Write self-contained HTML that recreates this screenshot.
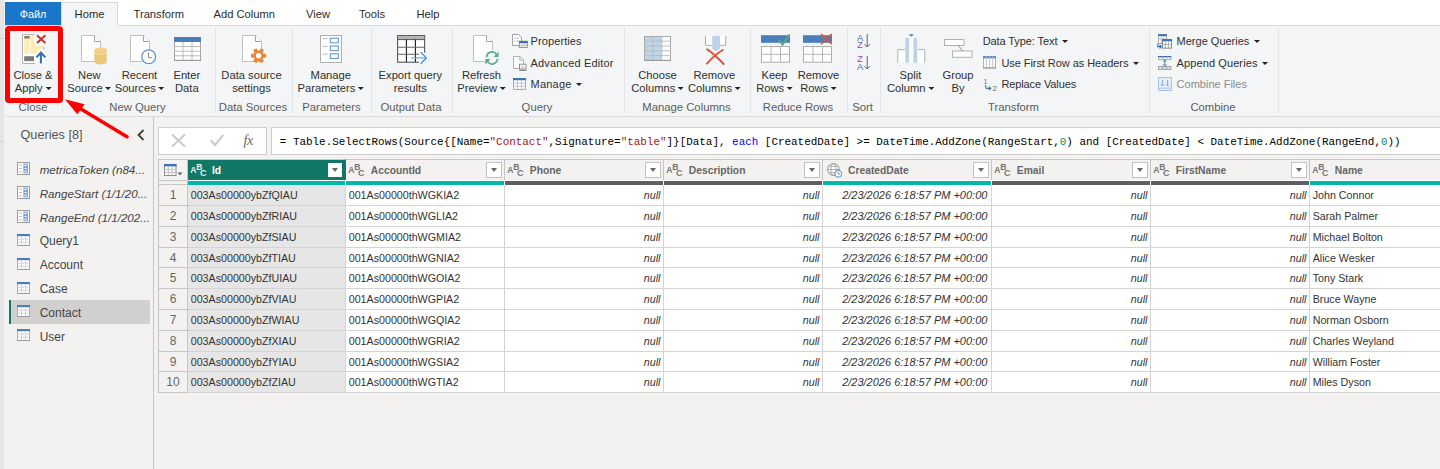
<!DOCTYPE html>
<html>
<head>
<meta charset="utf-8">
<title>Power Query Editor</title>
<style>
*{box-sizing:border-box;margin:0;padding:0}
html,body{width:1440px;height:469px;overflow:hidden;background:#f3f2f1;font-family:"Liberation Sans",sans-serif;font-size:11px;color:#333}
#root{position:relative;width:1440px;height:469px;overflow:hidden;background:#e5e5e5}
#tabrow{position:absolute;left:5px;top:0;width:1435px;height:26px;background:#fff}
#ribbon{position:absolute;left:5px;top:25px;width:1435px;height:92px;background:#f3f5f7;border-top:1px solid #d6d8db;border-bottom:1px solid #d9dbdd}
.tab{position:absolute;top:2px;height:23px;line-height:24.4px;font-size:11.2px;color:#2b2b2b;white-space:nowrap}
#filetab{left:5px;width:56px;background:#1a76c8;color:#fff;text-align:center}
#hometab{left:61px;width:57px;background:#f3f5f7;border:1px solid #d6d8db;border-bottom:none;height:24px;text-align:center;line-height:23.4px}
.rl{position:absolute;font-size:11.2px;line-height:13px;color:#303030;text-align:center;white-space:nowrap;transform:translateX(-50%)}
.rs{position:absolute;font-size:11px;line-height:13px;color:#303030;white-space:nowrap}
.gl{position:absolute;top:100.7px;font-size:11.3px;line-height:13px;color:#5c5c5c;white-space:nowrap;transform:translateX(-50%)}
.sep{position:absolute;top:28px;width:1px;height:85px;background:#e2e4e7}
.dd{display:inline-block;width:0;height:0;border-left:3px solid transparent;border-right:3px solid transparent;border-top:3px solid #222;margin-left:2.6px;position:relative;top:-2px}
svg{position:absolute;overflow:visible}
#qpane{position:absolute;left:5px;top:117px;width:149px;height:352px;background:#f3f2f1;border-right:1px solid #c8c6c4}
.qi{position:absolute;left:39.7px;font-size:12px;line-height:16px;color:#444;white-space:nowrap}
.qi.it{font-style:italic;font-size:11.6px}
#main{position:absolute;left:154px;top:117px;width:1286px;height:352px;background:#f3f2f1}
#fxbox{position:absolute;left:158px;top:127px;width:109px;height:28px;background:#fff;border:1px solid #cfcdcb}
#fbox{position:absolute;left:271px;top:127px;width:1180px;height:28px;background:#fff;border:1px solid #cfcdcb;font-family:"Liberation Mono",monospace;font-size:10.93px;line-height:28.4px;white-space:pre;color:#000;padding-left:7.8px}
.k{color:#0000ff}.s{color:#a31515}.nn{color:#098658}
#grid{position:absolute;left:158px;top:159px;width:1282px;height:234px;background:#fff}
.hc{position:absolute;top:159px;height:21px;background:#f3f2f1;border-right:1px solid #c8c6c4;border-top:1px solid #c8c6c4;font-weight:bold;font-size:10.3px;line-height:22px;color:#666;white-space:nowrap}
.hc .nm{position:absolute;top:0}
.hc .btn{position:absolute;right:1.8px;top:2px;width:16px;height:16px;background:#fff;border:1px solid #c2c2c2}
.hc .btn:after{content:"";position:absolute;left:3.4px;top:5.4px;border-left:3.6px solid transparent;border-right:3.6px solid transparent;border-top:4px solid #666}
.abc{position:absolute;font-weight:bold;font-size:8.6px;line-height:9px;color:#747474}
.q{position:absolute;top:181px;height:4px}
.cell{position:absolute;font-size:10.7px;color:#333;white-space:nowrap;border-right:1px solid #d4d4d4;border-bottom:1px solid #d4d4d4;overflow:hidden}
.cell span{position:absolute;top:0}
.cell.n,.cell.d{font-style:italic}
.cell.n span{right:2.6px}.cell.d span{right:3.6px}
.cell.t span{left:2.7px}
.rn{position:absolute;left:158px;width:30px;background:#f3f2f1;border:1px solid #c8c6c4;border-top:none;text-align:center;font-size:12px;color:#666}
</style>
</head>
<body>
<div id="root">
<div id="tabrow"></div><div id="ribbon"></div>
<div id="filetab" class="tab" style="font-size:10.8px">Файл</div>
<div style="position:absolute;left:4px;top:0;width:1px;height:469px;background:#f2f2f2"></div>
<div style="position:absolute;left:0;top:38px;width:4px;height:1px;background:#cfcfcf"></div>
<div style="position:absolute;left:0;top:141px;width:4px;height:1px;background:#d2d2d2"></div>
<div id="hometab" class="tab">Home</div>
<div class="tab" style="left:133.5px">Transform</div>
<div class="tab" style="left:213.5px">Add Column</div>
<div class="tab" style="left:306px">View</div>
<div class="tab" style="left:359px">Tools</div>
<div class="tab" style="left:416.5px">Help</div>
<div class="sep" style="left:215px"></div>
<div class="sep" style="left:292px"></div>
<div class="sep" style="left:371px"></div>
<div class="sep" style="left:452px"></div>
<div class="sep" style="left:624px"></div>
<div class="sep" style="left:750px"></div>
<div class="sep" style="left:847px"></div>
<div class="sep" style="left:880px"></div>
<div class="sep" style="left:1149px"></div>
<div class="sep" style="left:1278px"></div>
<div class="sep" style="left:61.5px;top:100px;height:12px"></div>
<div class="rl" style="left:33px;top:68.5px">Close &amp;</div>
<div class="rl" style="left:33px;top:81.5px">Apply<i class="dd"></i></div>
<div class="rl" style="left:89.3px;top:68.5px">New</div>
<div class="rl" style="left:89.3px;top:81.5px">Source<i class="dd"></i></div>
<div class="rl" style="left:139.5px;top:68.5px">Recent</div>
<div class="rl" style="left:139.5px;top:81.5px">Sources<i class="dd"></i></div>
<div class="rl" style="left:186.8px;top:68.5px">Enter</div>
<div class="rl" style="left:186.8px;top:81.5px">Data</div>
<div class="rl" style="left:251.5px;top:68.5px">Data source</div>
<div class="rl" style="left:251.5px;top:81.5px">settings</div>
<div class="rl" style="left:330.8px;top:68.5px">Manage</div>
<div class="rl" style="left:330.8px;top:81.5px">Parameters<i class="dd"></i></div>
<div class="rl" style="left:410.3px;top:68.5px">Export query</div>
<div class="rl" style="left:410.3px;top:81.5px">results</div>
<div class="rl" style="left:481.5px;top:68.5px">Refresh</div>
<div class="rl" style="left:481.5px;top:81.5px">Preview<i class="dd"></i></div>
<div class="rl" style="left:657.5px;top:68.5px">Choose</div>
<div class="rl" style="left:657.5px;top:81.5px">Columns<i class="dd"></i></div>
<div class="rl" style="left:714.3px;top:68.5px">Remove</div>
<div class="rl" style="left:714.3px;top:81.5px">Columns<i class="dd"></i></div>
<div class="rl" style="left:774.5px;top:68.5px">Keep</div>
<div class="rl" style="left:774.5px;top:81.5px">Rows<i class="dd"></i></div>
<div class="rl" style="left:818.5px;top:68.5px">Remove</div>
<div class="rl" style="left:818.5px;top:81.5px">Rows<i class="dd"></i></div>
<div class="rl" style="left:910.5px;top:68.5px">Split</div>
<div class="rl" style="left:910.5px;top:81.5px">Column<i class="dd"></i></div>
<div class="rl" style="left:958px;top:68.5px">Group</div>
<div class="rl" style="left:958px;top:81.5px">By</div>
<div class="rs" style="left:530.6px;top:34.8px;letter-spacing:0.09px">Properties</div>
<div class="rs" style="left:530.6px;top:56.6px;letter-spacing:0.15px">Advanced Editor</div>
<div class="rs" style="left:530.6px;top:78.4px;letter-spacing:0.2px">Manage<i class="dd" style="margin-left:4.8px"></i></div>
<div class="rs" style="left:982.7px;top:34.8px;letter-spacing:-0.09px">Data Type: Text<i class="dd" style="margin-left:4.8px"></i></div>
<div class="rs" style="left:1001.4px;top:56.6px;letter-spacing:-0.06px">Use First Row as Headers<i class="dd" style="margin-left:4.8px"></i></div>
<div class="rs" style="left:1001.4px;top:78.4px;letter-spacing:-0.11px">Replace Values</div>
<div class="rs" style="left:1176.6px;top:34.8px">Merge Queries<i class="dd" style="margin-left:4.8px"></i></div>
<div class="rs" style="left:1176.6px;top:56.6px;letter-spacing:0.1px">Append Queries<i class="dd" style="margin-left:4.8px"></i></div>
<div class="rs" style="left:1176.6px;top:78.4px;color:#8c8c8c">Combine Files</div>
<div class="gl" style="left:33px">Close</div>
<div class="gl" style="left:137.5px">New Query</div>
<div class="gl" style="left:253px">Data Sources</div>
<div class="gl" style="left:331.5px">Parameters</div>
<div class="gl" style="left:411px">Output Data</div>
<div class="gl" style="left:537px">Query</div>
<div class="gl" style="left:686.5px">Manage Columns</div>
<div class="gl" style="left:798px">Reduce Rows</div>
<div class="gl" style="left:862.5px">Sort</div>
<div class="gl" style="left:1013.5px">Transform</div>
<div class="gl" style="left:1213px">Combine</div>
<svg style="left:22px;top:34px" width="25" height="30" viewBox="0 0 25 30"><rect x="0.5" y="0.5" width="22" height="29" fill="#fff"/><path d="M12.8 0.5 H0.5 V29.5 H12.8" fill="none" stroke="#b4b4b4"/><path d="M2.2 1.6 H12.5 V11.7 H20.6 V13.8 L13.4 19.8 H2.2 Z" fill="#fdedb3"/><rect x="7.6" y="5.2" width="1" height="14.6" fill="#fff"/><rect x="2.2" y="2" width="5.5" height="2.5" fill="#808080"/><rect x="2.2" y="22.2" width="9.8" height="4.9" fill="#7a7a7a"/><path d="M15 1.3 L23.4 9 M23.4 1.3 L15 9" stroke="#c9302c" stroke-width="2" fill="none"/><path d="M18.9 29.4 V19" stroke="#2f74b5" stroke-width="2.1" fill="none"/><path d="M14.4 23.4 L18.9 18.6 L23.4 23.4" stroke="#2f74b5" stroke-width="2.1" fill="none"/><path d="M21.7 12.2 V16" stroke="#9a9a9a" stroke-width="0.8"/></svg>
<svg style="left:80.5px;top:34.5px" width="20" height="27" viewBox="0 0 20 27"><path d="M0.5 0.5 H13.5 L19.5 6.5 V26.5 H0.5 Z" fill="#fff" stroke="#c0c0c0"/><path d="M13.5 0.5 V6.5 H19.5" fill="#fff" stroke="#a4a4a4"/></svg>
<svg style="left:94px;top:46.5px" width="13" height="18" viewBox="0 0 13 18"><path d="M0.3 3 V15 A6.2 2.6 0 0 0 12.7 15 V3 Z" fill="#ecc77a"/><ellipse cx="6.5" cy="3" rx="6.2" ry="2.4" fill="#f0d08c"/><path d="M0.3 4.8 A6.2 2.4 0 0 0 12.7 4.8" fill="none" stroke="#f7e6bd" stroke-width="0.9"/></svg>
<svg style="left:130px;top:34.5px" width="20" height="27" viewBox="0 0 20 27"><path d="M0.5 0.5 H13.5 L19.5 6.5 V26.5 H0.5 Z" fill="#fff" stroke="#c0c0c0"/><path d="M13.5 0.5 V6.5 H19.5" fill="#fff" stroke="#a4a4a4"/></svg>
<svg style="left:140.5px;top:49.3px" width="16" height="16" viewBox="0 0 16 16"><circle cx="7.7" cy="7.7" r="6.9" fill="#fff" stroke="#5b8fc7" stroke-width="1.2"/><path d="M7.5 3.6 V8.6 H11" fill="none" stroke="#8a8a8a" stroke-width="1"/></svg>
<svg style="left:174px;top:37px" width="27" height="24" viewBox="0 0 27 24"><rect x="0.5" y="0.5" width="26" height="23" fill="#fff" stroke="#a6a6a6"/><rect x="0" y="0" width="27" height="5" fill="#4a7ebb"/><path d="M0.5 9.6h26M0.5 14.2h26M0.5 18.8h26M9 5v18.5M18 5v18.5" stroke="#b4b4b4" stroke-width="0.9" fill="none"/><path d="M0 23.4h27" stroke="#9a9a9a" stroke-width="1.2"/></svg>
<svg style="left:242px;top:34.5px" width="20" height="27" viewBox="0 0 20 27"><path d="M0.5 0.5 H13.5 L19.5 6.5 V26.5 H0.5 Z" fill="#fff" stroke="#c0c0c0"/><path d="M13.5 0.5 V6.5 H19.5" fill="#fff" stroke="#a4a4a4"/></svg>
<svg style="left:251px;top:48px" width="16" height="16" viewBox="0 0 16 16"><g transform="translate(7.6,7.7)"><circle r="5.2" fill="#e8893a"/><rect x="-1.9" y="-7.6" width="3.8" height="5" transform="rotate(30)" fill="#e8893a"/><rect x="-1.9" y="-7.6" width="3.8" height="5" transform="rotate(90)" fill="#e8893a"/><rect x="-1.9" y="-7.6" width="3.8" height="5" transform="rotate(150)" fill="#e8893a"/><rect x="-1.9" y="-7.6" width="3.8" height="5" transform="rotate(210)" fill="#e8893a"/><rect x="-1.9" y="-7.6" width="3.8" height="5" transform="rotate(270)" fill="#e8893a"/><rect x="-1.9" y="-7.6" width="3.8" height="5" transform="rotate(330)" fill="#e8893a"/><circle r="2.7" fill="#fff"/></g></svg>
<svg style="left:320px;top:35px" width="22" height="28" viewBox="0 0 22 28"><rect x="0.5" y="0.5" width="21" height="27" fill="#fff" stroke="#b0b0b0"/><rect x="10.3" y="3.2" width="8" height="4.6" fill="#fbfdff" stroke="#5b8fc7" stroke-width="1"/><path d="M2.5 3.6h5" stroke="#b0b0b0" stroke-width="0.9"/><rect x="10.3" y="11" width="8" height="4.6" fill="#fbfdff" stroke="#5b8fc7" stroke-width="1"/><path d="M2.5 11.4h5" stroke="#b0b0b0" stroke-width="0.9"/><rect x="10.3" y="18.8" width="8" height="4.6" fill="#fbfdff" stroke="#5b8fc7" stroke-width="1"/><path d="M2.5 19.2h5" stroke="#b0b0b0" stroke-width="0.9"/></svg>
<svg style="left:397px;top:35px" width="30" height="28" viewBox="0 0 30 28"><rect x="0.6" y="0.6" width="27" height="26.6" fill="#fff" stroke="#555" stroke-width="1.1"/><rect x="1" y="1" width="26.2" height="3.4" fill="#b5b5b5"/><path d="M0.6 4.6h27" stroke="#555" stroke-width="1"/><path d="M9.4 4.6V27M18.4 4.6V27" stroke="#1a1a1a" stroke-width="1.1"/><path d="M0.6 12.2h27M0.6 19.2h27" stroke="#666" stroke-width="1.1"/><rect x="14" y="17.5" width="16" height="11" fill="#f3f5f7" opacity="0.0"/><rect x="22" y="17.8" width="6.6" height="10.4" fill="#fbfcfd"/><path d="M14 22.9 H28.6" stroke="#6fb0e0" stroke-width="1.3"/><path d="M23.6 17 L29.3 22.9 L23.6 28.8" stroke="#3c92d4" stroke-width="1.3" fill="none"/></svg>
<svg style="left:473px;top:34.5px" width="20" height="27" viewBox="0 0 20 27"><path d="M0.5 0.5 H13.5 L19.5 6.5 V26.5 H0.5 Z" fill="#fff" stroke="#c0c0c0"/><path d="M13.5 0.5 V6.5 H19.5" fill="#fff" stroke="#a4a4a4"/></svg>
<svg style="left:483.5px;top:49.5px" width="16" height="16" viewBox="0 0 16 16"><circle cx="8" cy="8" r="7.6" fill="#f3f5f7"/><path d="M2.6 7.2 A5.4 5.4 0 0 1 12.6 4.6" fill="none" stroke="#62ab90" stroke-width="1.8"/><path d="M14.6 1.6 V7 H9.4 Z" fill="#62ab90"/><path d="M13.4 8.8 A5.4 5.4 0 0 1 3.4 11.4" fill="none" stroke="#62ab90" stroke-width="1.8"/><path d="M1.4 14.4 V9 H6.6 Z" fill="#62ab90"/></svg>
<svg style="left:512px;top:34px" width="16" height="14" viewBox="0 0 16 14"><path d="M0.5 0.5 H6.5 L9.5 3.5 V11.5 H0.5 Z" fill="#fff" stroke="#9a9a9a" stroke-width="0.9"/><path d="M2 4.2h1.2M4.2 4.2h3M2 7h1.2M4.2 7h3" stroke="#aaa" stroke-width="0.8"/><rect x="7.3" y="7.2" width="8" height="6.3" fill="#fff" stroke="#8a8a8a" stroke-width="0.9"/><rect x="7" y="7" width="8.7" height="2.2" fill="#3e72b8"/><path d="M7.3 11.3h8M10 9.2v4.3M12.7 9.2v4.3" stroke="#aaa" stroke-width="0.7"/></svg>
<svg style="left:513px;top:55.5px" width="14" height="15" viewBox="0 0 14 15"><path d="M0.5 0.5 H6.8 L10.5 4.2 V12.5 H0.5 Z" fill="#fff" stroke="#a8a8a8" stroke-width="0.9"/><path d="M6.8 0.5 V4.2 H10.5" fill="none" stroke="#a8a8a8" stroke-width="0.9"/><rect x="6.5" y="8.2" width="6.5" height="4.8" fill="#fff" stroke="#8a8a8a" stroke-width="0.9"/><path d="M6.2 14.3h7.2" stroke="#777" stroke-width="1.1"/><path d="M8 10.2h3.4M8 11.6h3.4" stroke="#aaa" stroke-width="0.6"/></svg>
<svg style="left:513px;top:78px" width="13" height="12" viewBox="0 0 13 12"><rect x="0.5" y="0.5" width="12" height="11" fill="#fff" stroke="#a0a0a0" stroke-width="0.9"/><rect x="0" y="0" width="13" height="2.2" fill="#3e72b8"/><path d="M0.5 5.2h12M0.5 8.2h12M4.5 2.2v9.3M8.5 2.2v9.3" stroke="#b8b8b8" stroke-width="0.8" fill="none"/></svg>
<svg style="left:644px;top:36px" width="27" height="25" viewBox="0 0 27 25"><rect x="0.5" y="0.5" width="26" height="24" fill="#fff" stroke="#a8a8a8"/><rect x="1" y="1" width="16.8" height="23" fill="#c0d5ea"/><path d="M0.5 5.2h26M0.5 10h26M0.5 14.8h26M0.5 19.6h26M9 0.5v24M17.8 0.5v24" stroke="#b8b8b8" stroke-width="0.9" fill="none"/><path d="M0 24.4h27" stroke="#9a9a9a" stroke-width="1.2"/></svg>
<svg style="left:705px;top:36px" width="22" height="29" viewBox="0 0 22 29"><path d="M0.7 0 V9.2 H6.8 M14.8 9.2 H20.7 V0" fill="#fff" stroke="#9a9a9a" stroke-width="1"/><rect x="1.2" y="0" width="19" height="8.7" fill="#fff"/><path d="M7.2 0 H15 V12.5 L11.1 15.5 L7.2 12.5 Z" fill="#bdd2e8"/><path d="M2.2 13.4 C7 16.5 13 22 18.6 28 M17.8 14 C11 18 5.5 23.5 2 27.6" stroke="#d9583a" stroke-width="2" fill="none" stroke-linecap="round"/></svg>
<svg style="left:760.7px;top:35px" width="30" height="28" viewBox="0 0 30 28"><rect x="0" y="0.2" width="29" height="7.6" fill="#4a7ebb"/><rect x="0.5" y="11.5" width="28" height="15.7" fill="#fff" stroke="#adadad"/><path d="M0.5 19.3h28M10 11.5v15.7M19.5 11.5v15.7" stroke="#b6b6b6" stroke-width="1" fill="none"/><path d="M18 5.2 L21.6 9.6 L28.8 -0.6" stroke="#5aa882" stroke-width="2" fill="none"/></svg>
<svg style="left:803.3px;top:35px" width="30" height="28" viewBox="0 0 30 28"><rect x="0" y="0.2" width="29" height="7.6" fill="#4a7ebb"/><rect x="0.5" y="11.5" width="28" height="15.7" fill="#fff" stroke="#adadad"/><path d="M0.5 19.3h28M10 11.5v15.7M19.5 11.5v15.7" stroke="#b6b6b6" stroke-width="1" fill="none"/><path d="M18.6 -0.4 L28.4 8.6 M28.2 -0.4 L18.6 8.6" stroke="#d9583a" stroke-width="1.7" fill="none" stroke-linecap="round"/></svg>
<div style="position:absolute;left:857px;top:33.5px;font-size:9.5px;line-height:8px;color:#3b6fb0">A</div>
<div style="position:absolute;left:857.3px;top:41.2px;font-size:9px;line-height:8px;color:#9448b0">Z</div>
<div style="position:absolute;left:857.3px;top:54.9px;font-size:9px;line-height:8px;color:#9448b0">Z</div>
<div style="position:absolute;left:857px;top:63.1px;font-size:9.5px;line-height:8px;color:#3b6fb0">A</div>
<svg style="left:864px;top:34px" width="7" height="14" viewBox="0 0 7 14"><path d="M3.2 0 V13 M0.6 10.2 L3.2 13 L5.8 10.2" stroke="#555" stroke-width="0.9" fill="none"/></svg>
<svg style="left:864px;top:56px" width="7" height="14" viewBox="0 0 7 14"><path d="M3.2 0 V13 M0.6 10.2 L3.2 13 L5.8 10.2" stroke="#555" stroke-width="0.9" fill="none"/></svg>
<svg style="left:896.5px;top:34px" width="29" height="29" viewBox="0 0 29 29"><rect x="0.8" y="15.6" width="27" height="13.2" fill="#fff"/><path d="M0.8 28.8 V15.6 H8.2 M20.8 15.6 H27.8 V28.8" fill="none" stroke="#b0b0b0" stroke-width="1"/><rect x="8.2" y="4" width="12.6" height="24.8" fill="#fff"/><rect x="8.3" y="4" width="3.8" height="24.8" fill="#bdd2e8"/><rect x="16.4" y="4" width="3.8" height="24.8" fill="#bdd2e8"/><path d="M11.8 0.2 h5 l-2.5 2.6z" fill="#4a7ebb"/></svg>
<svg style="left:944px;top:39px" width="29" height="19" viewBox="0 0 29 19"><rect x="0.5" y="0.5" width="19.5" height="6" fill="#fff" stroke="#b0b0b0"/><rect x="8.5" y="12" width="19.5" height="6.3" fill="#fff" stroke="#b0b0b0"/><path d="M14.5 6.5 L18.5 12" stroke="#8a8a8a" stroke-width="0.9"/></svg>
<svg style="left:983px;top:56.3px" width="13" height="12.4" viewBox="0 0 13 12.4"><rect x="0.5" y="0.5" width="12" height="11.4" fill="#fff" stroke="#a6a6a6" stroke-width="0.9"/><rect x="0" y="0" width="13" height="2.4" fill="#5b8fc7"/><path d="M3.3 0v2.4M6.5 0v2.4M9.7 0v2.4" stroke="#a9c6e6" stroke-width="0.7"/><path d="M3.3 2.4v9.4M6.5 2.4v9.4M9.7 2.4v9.4" stroke="#bdbdbd" stroke-width="0.9" fill="none"/><path d="M0.5 5.4h12M0.5 8.6h12" stroke="#e4e4e4" stroke-width="0.6"/><path d="M0 12h13" stroke="#8f8f8f" stroke-width="0.9"/></svg>
<div style="position:absolute;left:983.5px;top:78px;font-size:7px;line-height:7px;color:#777">1</div>
<div style="position:absolute;left:992.6px;top:85px;font-size:8px;line-height:8px;color:#666">2</div>
<svg style="left:985px;top:84.5px" width="7" height="6" viewBox="0 0 7 6"><path d="M0.6 0 V2 Q0.6 3.4 2 3.4 H5.4 M3.8 1.6 L5.8 3.4 L3.8 5.2" stroke="#3e72b8" stroke-width="1.1" fill="none"/></svg>
<svg style="left:1157px;top:33.6px" width="15" height="16" viewBox="0 0 15 16"><rect x="1.5" y="0.5" width="8" height="9" fill="#fff" stroke="#9a9a9a" stroke-width="0.8"/><rect x="1.2" y="0.2" width="8.6" height="2" fill="#3e72b8"/><path d="M4.2 2v7M6.8 2v7M1.5 5h8" stroke="#aaa" stroke-width="0.7"/><rect x="5.5" y="5.5" width="9" height="8.6" fill="#fff" stroke="#777" stroke-width="0.9"/><rect x="5.2" y="5.2" width="9.6" height="2.1" fill="#3e72b8"/><path d="M8.5 7.3v6.8M11.5 7.3v6.8M5.5 10.6h9" stroke="#999" stroke-width="0.7"/><path d="M0.8 9.5 V12.6 H4 M2.6 10.8 L4.3 12.6 L2.6 14.6" stroke="#2f74b5" stroke-width="1.1" fill="none"/></svg>
<svg style="left:1158px;top:55.5px" width="14" height="14" viewBox="0 0 14 14"><rect x="0.5" y="0.5" width="12.5" height="3" fill="#fff" stroke="#9a9a9a" stroke-width="0.8"/><rect x="0.2" y="0" width="13" height="1.4" fill="#3e72b8"/><path d="M4.6 0.8v2.7M8.8 0.8v2.7" stroke="#aaa" stroke-width="0.7"/><rect x="0.5" y="10.6" width="12.5" height="3" fill="#d8d8d8" stroke="#9a9a9a" stroke-width="0.8"/><path d="M4.6 10.6v3M8.8 10.6v3" stroke="#999" stroke-width="0.7"/><path d="M6.8 4 V10 M5.2 5.6 L6.8 4 L8.4 5.6 M5.2 8.4 L6.8 10 L8.4 8.4" stroke="#2f74b5" stroke-width="0.9" fill="none"/></svg>
<svg style="left:1158px;top:77px" width="14" height="14" viewBox="0 0 14 14"><rect x="0.5" y="0.5" width="13" height="13" fill="#e6eef8" stroke="#a4c0e2" stroke-width="1"/><path d="M0.5 11.2h13" stroke="#a4c0e2" stroke-width="0.9"/><path d="M4.4 3 V9 M2.8 7.4 L4.4 9 L6 7.4 M9.6 3 V9 M8 7.4 L9.6 9 L11.2 7.4" stroke="#86abd9" stroke-width="1" fill="none"/></svg>
<div id="qpane"></div><div id="main"></div>
<div style="position:absolute;left:20.5px;top:125.5px;font-size:12.7px;line-height:18px;color:#555;white-space:nowrap" id="qh">Queries [8]</div>
<svg style="left:137px;top:128.5px" width="8" height="12" viewBox="0 0 8 12"><path d="M6.5 1 L1.5 6 L6.5 11" fill="none" stroke="#3c3c3c" stroke-width="1.8"/></svg>
<div style="position:absolute;left:9px;top:300px;width:141px;height:24px;background:#d2d0ce"></div>
<div style="position:absolute;left:9px;top:300px;width:2px;height:24px;background:#127866"></div>
<div class="qi it" style="top:162.0px">metricaToken (n84...</div>
<svg style="left:17px;top:162.3px" width="13" height="13" viewBox="0 0 13 13"><rect x="0.5" y="0.5" width="12" height="12" fill="#fff" stroke="#9c9c9c"/><rect x="6.9" y="2.1" width="3.6" height="2.2" fill="#eef4fb" stroke="#6a9ad2" stroke-width="0.9"/><rect x="6.9" y="5.4" width="3.6" height="2.2" fill="#eef4fb" stroke="#6a9ad2" stroke-width="0.9"/><rect x="6.9" y="8.7" width="3.6" height="2.2" fill="#eef4fb" stroke="#6a9ad2" stroke-width="0.9"/><path d="M2.2 3.2h2.8M2.2 6.5h2.8M2.2 9.8h2.8" stroke="#b4b4b4" stroke-width="0.9"/></svg>
<div class="qi it" style="top:185.8px">RangeStart (1/1/20...</div>
<svg style="left:17px;top:186.1px" width="13" height="13" viewBox="0 0 13 13"><rect x="0.5" y="0.5" width="12" height="12" fill="#fff" stroke="#9c9c9c"/><rect x="6.9" y="2.1" width="3.6" height="2.2" fill="#eef4fb" stroke="#6a9ad2" stroke-width="0.9"/><rect x="6.9" y="5.4" width="3.6" height="2.2" fill="#eef4fb" stroke="#6a9ad2" stroke-width="0.9"/><rect x="6.9" y="8.7" width="3.6" height="2.2" fill="#eef4fb" stroke="#6a9ad2" stroke-width="0.9"/><path d="M2.2 3.2h2.8M2.2 6.5h2.8M2.2 9.8h2.8" stroke="#b4b4b4" stroke-width="0.9"/></svg>
<div class="qi it" style="top:209.6px">RangeEnd (1/1/202...</div>
<svg style="left:17px;top:209.8px" width="13" height="13" viewBox="0 0 13 13"><rect x="0.5" y="0.5" width="12" height="12" fill="#fff" stroke="#9c9c9c"/><rect x="6.9" y="2.1" width="3.6" height="2.2" fill="#eef4fb" stroke="#6a9ad2" stroke-width="0.9"/><rect x="6.9" y="5.4" width="3.6" height="2.2" fill="#eef4fb" stroke="#6a9ad2" stroke-width="0.9"/><rect x="6.9" y="8.7" width="3.6" height="2.2" fill="#eef4fb" stroke="#6a9ad2" stroke-width="0.9"/><path d="M2.2 3.2h2.8M2.2 6.5h2.8M2.2 9.8h2.8" stroke="#b4b4b4" stroke-width="0.9"/></svg>
<div class="qi" style="top:233.3px">Query1</div>
<svg style="left:17px;top:234.1px" width="13" height="12" viewBox="0 0 13 12"><rect x="0.5" y="0.5" width="12" height="11" fill="#fff" stroke="#ababab"/><rect x="0" y="0" width="13" height="2.2" fill="#4a7ebb"/><path d="M0.5 5.2h12M0.5 8.2h12M4.5 2.4v9M8.5 2.4v9" stroke="#cfcfcf" stroke-width="0.9" fill="none"/><path d="M0 11.5h13" stroke="#9c9c9c" stroke-width="1"/></svg>
<div class="qi" style="top:257.1px">Account</div>
<svg style="left:17px;top:257.9px" width="13" height="12" viewBox="0 0 13 12"><rect x="0.5" y="0.5" width="12" height="11" fill="#fff" stroke="#ababab"/><rect x="0" y="0" width="13" height="2.2" fill="#4a7ebb"/><path d="M0.5 5.2h12M0.5 8.2h12M4.5 2.4v9M8.5 2.4v9" stroke="#cfcfcf" stroke-width="0.9" fill="none"/><path d="M0 11.5h13" stroke="#9c9c9c" stroke-width="1"/></svg>
<div class="qi" style="top:280.9px">Case</div>
<svg style="left:17px;top:281.6px" width="13" height="12" viewBox="0 0 13 12"><rect x="0.5" y="0.5" width="12" height="11" fill="#fff" stroke="#ababab"/><rect x="0" y="0" width="13" height="2.2" fill="#4a7ebb"/><path d="M0.5 5.2h12M0.5 8.2h12M4.5 2.4v9M8.5 2.4v9" stroke="#cfcfcf" stroke-width="0.9" fill="none"/><path d="M0 11.5h13" stroke="#9c9c9c" stroke-width="1"/></svg>
<div class="qi" style="top:304.7px">Contact</div>
<svg style="left:17px;top:305.4px" width="13" height="12" viewBox="0 0 13 12"><rect x="0.5" y="0.5" width="12" height="11" fill="#fff" stroke="#ababab"/><rect x="0" y="0" width="13" height="2.2" fill="#4a7ebb"/><path d="M0.5 5.2h12M0.5 8.2h12M4.5 2.4v9M8.5 2.4v9" stroke="#cfcfcf" stroke-width="0.9" fill="none"/><path d="M0 11.5h13" stroke="#9c9c9c" stroke-width="1"/></svg>
<div class="qi" style="top:328.5px">User</div>
<svg style="left:17px;top:329.1px" width="13" height="12" viewBox="0 0 13 12"><rect x="0.5" y="0.5" width="12" height="11" fill="#fff" stroke="#ababab"/><rect x="0" y="0" width="13" height="2.2" fill="#4a7ebb"/><path d="M0.5 5.2h12M0.5 8.2h12M4.5 2.4v9M8.5 2.4v9" stroke="#cfcfcf" stroke-width="0.9" fill="none"/><path d="M0 11.5h13" stroke="#9c9c9c" stroke-width="1"/></svg>
<div id="fxbox"></div>
<svg style="left:171px;top:134px" width="15" height="13" viewBox="0 0 15 13"><path d="M1 0.5 L14 12.5 M14 0.5 L1 12.5" stroke="#cbcbcb" stroke-width="2.1" fill="none"/></svg>
<svg style="left:210px;top:134px" width="14" height="12" viewBox="0 0 14 12"><path d="M0.8 6.2 L5 11 L13.2 0.8" stroke="#cbcbcb" stroke-width="2.1" fill="none"/></svg>
<div style="position:absolute;left:243.5px;top:132px;font-family:'Liberation Serif',serif;font-style:italic;font-size:14px;line-height:18px;color:#666;letter-spacing:-0.3px">fx</div>
<div id="fbox">= Table.SelectRows(Source{[Name=<span class="s">"Contact"</span>,Signature=<span class="s">"table"</span>]}[Data], <span class="k">each</span> [CreatedDate] &gt;= DateTime.AddZone(RangeStart,<span class="nn">0</span>) and [CreatedDate] &lt; DateTime.AddZone(RangeEnd,<span class="nn">0</span>))</div>
<div id="grid"></div>
<div style="position:absolute;left:158px;top:159px;width:30px;height:22px;background:#f3f2f1;border:1px solid #c8c6c4"></div>
<div style="position:absolute;left:158px;top:181px;width:30px;height:4px;background:#f3f2f1;border:1px solid #c8c6c4;border-top:none"></div>
<svg style="left:164px;top:163.5px" width="19" height="12" viewBox="0 0 19 12"><rect x="0.5" y="0.5" width="11.5" height="11" fill="#fff" stroke="#8c8c8c"/><rect x="0" y="0" width="12.5" height="2.4" fill="#3e72b8"/><path d="M0.5 5.3h11.5M0.5 8.3h11.5M4.3 2.4v9M8.2 2.4v9" stroke="#b8b8b8" stroke-width="0.9" fill="none"/><path d="M13.6 8.6h5l-2.5 3z" fill="#666"/></svg>
<div class="hc" style="left:188px;width:158px;background:#127866;border-right-color:#127866;color:#fff;"><span class="nm" style="left:24px">Id</span><span class="btn" style="border-color:#127866"></span></div>
<div class="abc" style="left:190.2px;top:166.2px;color:#e8f3f0">A</div><div class="abc" style="left:196.2px;top:162.6px;color:#e8f3f0">B</div><div class="abc" style="left:200px;top:169px;color:#e8f3f0;font-size:9px">C</div>
<div class="q" style="left:188px;width:157.0px;background:#01b8aa"></div>
<div class="hc" style="left:346px;width:159px;"><span class="nm" style="left:24.8px">AccountId</span><span class="btn"></span></div>
<div class="abc" style="left:348.2px;top:166.2px;color:#747474">A</div><div class="abc" style="left:354.2px;top:162.6px;color:#747474">B</div><div class="abc" style="left:358px;top:169px;color:#747474;font-size:9px">C</div>
<div class="q" style="left:346px;width:158.0px;background:#01b8aa"></div>
<div class="hc" style="left:505px;width:159px;"><span class="nm" style="left:24.8px">Phone</span><span class="btn"></span></div>
<div class="abc" style="left:507.2px;top:166.2px;color:#747474">A</div><div class="abc" style="left:513.2px;top:162.6px;color:#747474">B</div><div class="abc" style="left:517px;top:169px;color:#747474;font-size:9px">C</div>
<div class="q" style="left:505px;width:158.0px;background:#5f5f5f"></div>
<div class="hc" style="left:664px;width:159px;"><span class="nm" style="left:24.8px">Description</span><span class="btn"></span></div>
<div class="abc" style="left:666.2px;top:166.2px;color:#747474">A</div><div class="abc" style="left:672.2px;top:162.6px;color:#747474">B</div><div class="abc" style="left:676px;top:169px;color:#747474;font-size:9px">C</div>
<div class="q" style="left:664px;width:158.0px;background:#5f5f5f"></div>
<div class="hc" style="left:823px;width:169px;"><span class="nm" style="left:25px">CreatedDate</span><span class="btn"></span></div>
<svg style="left:826.5px;top:163px" width="16" height="15" viewBox="0 0 16 15"><circle cx="6.5" cy="6.5" r="5.9" fill="#fff" stroke="#8a8a8a" stroke-width="0.9"/><ellipse cx="6.5" cy="6.5" rx="2.6" ry="5.9" fill="none" stroke="#9a9a9a" stroke-width="0.8"/><path d="M0.6 6.5h11.8M1.6 3.3h9.8M1.6 9.7h9.8" stroke="#9a9a9a" stroke-width="0.8"/><circle cx="11.3" cy="10.8" r="3.4" fill="#fff" stroke="#4f8bd0" stroke-width="1"/><path d="M11.1 8.9v2.1h1.7" stroke="#666" stroke-width="0.8" fill="none"/></svg>
<div class="q" style="left:823px;width:168.0px;background:#01b8aa"></div>
<div class="hc" style="left:992px;width:159px;"><span class="nm" style="left:24.8px">Email</span><span class="btn"></span></div>
<div class="abc" style="left:994.2px;top:166.2px;color:#747474">A</div><div class="abc" style="left:1000.2px;top:162.6px;color:#747474">B</div><div class="abc" style="left:1004px;top:169px;color:#747474;font-size:9px">C</div>
<div class="q" style="left:992px;width:158.0px;background:#5f5f5f"></div>
<div class="hc" style="left:1151px;width:159px;"><span class="nm" style="left:24.8px">FirstName</span><span class="btn"></span></div>
<div class="abc" style="left:1153.2px;top:166.2px;color:#747474">A</div><div class="abc" style="left:1159.2px;top:162.6px;color:#747474">B</div><div class="abc" style="left:1163px;top:169px;color:#747474;font-size:9px">C</div>
<div class="q" style="left:1151px;width:158.0px;background:#5f5f5f"></div>
<div class="hc" style="left:1310px;width:159px;"><span class="nm" style="left:24.8px">Name</span><span class="btn"></span></div>
<div class="abc" style="left:1312.2px;top:166.2px;color:#747474">A</div><div class="abc" style="left:1318.2px;top:162.6px;color:#747474">B</div><div class="abc" style="left:1322px;top:169px;color:#747474;font-size:9px">C</div>
<div class="q" style="left:1310px;width:158.0px;background:#01b8aa"></div>
<div class="rn" style="top:185px;height:21px;line-height:21px">1</div>
<div class="cell t" style="left:188px;top:185px;width:158px;height:21px;line-height:21px;background:#e6e6e6"><span>003As00000ybZfQIAU</span></div>
<div class="cell t" style="left:346px;top:185px;width:159px;height:21px;line-height:21px"><span>001As00000thWGKIA2</span></div>
<div class="cell n" style="left:505px;top:185px;width:159px;height:21px;line-height:21px"><span>null</span></div>
<div class="cell n" style="left:664px;top:185px;width:159px;height:21px;line-height:21px"><span>null</span></div>
<div class="cell d" style="left:823px;top:185px;width:169px;height:21px;line-height:21px;font-size:11px"><span>2/23/2026 6:18:57 PM +00:00</span></div>
<div class="cell n" style="left:992px;top:185px;width:159px;height:21px;line-height:21px"><span>null</span></div>
<div class="cell n" style="left:1151px;top:185px;width:159px;height:21px;line-height:21px"><span>null</span></div>
<div class="cell t" style="left:1310px;top:185px;width:159px;height:21px;line-height:21px"><span>John Connor</span></div>
<div class="rn" style="top:206px;height:21px;line-height:21px">2</div>
<div class="cell t" style="left:188px;top:206px;width:158px;height:21px;line-height:21px;background:#e6e6e6"><span>003As00000ybZfRIAU</span></div>
<div class="cell t" style="left:346px;top:206px;width:159px;height:21px;line-height:21px"><span>001As00000thWGLIA2</span></div>
<div class="cell n" style="left:505px;top:206px;width:159px;height:21px;line-height:21px"><span>null</span></div>
<div class="cell n" style="left:664px;top:206px;width:159px;height:21px;line-height:21px"><span>null</span></div>
<div class="cell d" style="left:823px;top:206px;width:169px;height:21px;line-height:21px;font-size:11px"><span>2/23/2026 6:18:57 PM +00:00</span></div>
<div class="cell n" style="left:992px;top:206px;width:159px;height:21px;line-height:21px"><span>null</span></div>
<div class="cell n" style="left:1151px;top:206px;width:159px;height:21px;line-height:21px"><span>null</span></div>
<div class="cell t" style="left:1310px;top:206px;width:159px;height:21px;line-height:21px"><span>Sarah Palmer</span></div>
<div class="rn" style="top:227px;height:21px;line-height:21px">3</div>
<div class="cell t" style="left:188px;top:227px;width:158px;height:21px;line-height:21px;background:#e6e6e6"><span>003As00000ybZfSIAU</span></div>
<div class="cell t" style="left:346px;top:227px;width:159px;height:21px;line-height:21px"><span>001As00000thWGMIA2</span></div>
<div class="cell n" style="left:505px;top:227px;width:159px;height:21px;line-height:21px"><span>null</span></div>
<div class="cell n" style="left:664px;top:227px;width:159px;height:21px;line-height:21px"><span>null</span></div>
<div class="cell d" style="left:823px;top:227px;width:169px;height:21px;line-height:21px;font-size:11px"><span>2/23/2026 6:18:57 PM +00:00</span></div>
<div class="cell n" style="left:992px;top:227px;width:159px;height:21px;line-height:21px"><span>null</span></div>
<div class="cell n" style="left:1151px;top:227px;width:159px;height:21px;line-height:21px"><span>null</span></div>
<div class="cell t" style="left:1310px;top:227px;width:159px;height:21px;line-height:21px"><span>Michael Bolton</span></div>
<div class="rn" style="top:248px;height:20px;line-height:20px">4</div>
<div class="cell t" style="left:188px;top:248px;width:158px;height:20px;line-height:20px;background:#e6e6e6"><span>003As00000ybZfTIAU</span></div>
<div class="cell t" style="left:346px;top:248px;width:159px;height:20px;line-height:20px"><span>001As00000thWGNIA2</span></div>
<div class="cell n" style="left:505px;top:248px;width:159px;height:20px;line-height:20px"><span>null</span></div>
<div class="cell n" style="left:664px;top:248px;width:159px;height:20px;line-height:20px"><span>null</span></div>
<div class="cell d" style="left:823px;top:248px;width:169px;height:20px;line-height:20px;font-size:11px"><span>2/23/2026 6:18:57 PM +00:00</span></div>
<div class="cell n" style="left:992px;top:248px;width:159px;height:20px;line-height:20px"><span>null</span></div>
<div class="cell n" style="left:1151px;top:248px;width:159px;height:20px;line-height:20px"><span>null</span></div>
<div class="cell t" style="left:1310px;top:248px;width:159px;height:20px;line-height:20px"><span>Alice Wesker</span></div>
<div class="rn" style="top:268px;height:21px;line-height:21px">5</div>
<div class="cell t" style="left:188px;top:268px;width:158px;height:21px;line-height:21px;background:#e6e6e6"><span>003As00000ybZfUIAU</span></div>
<div class="cell t" style="left:346px;top:268px;width:159px;height:21px;line-height:21px"><span>001As00000thWGOIA2</span></div>
<div class="cell n" style="left:505px;top:268px;width:159px;height:21px;line-height:21px"><span>null</span></div>
<div class="cell n" style="left:664px;top:268px;width:159px;height:21px;line-height:21px"><span>null</span></div>
<div class="cell d" style="left:823px;top:268px;width:169px;height:21px;line-height:21px;font-size:11px"><span>2/23/2026 6:18:57 PM +00:00</span></div>
<div class="cell n" style="left:992px;top:268px;width:159px;height:21px;line-height:21px"><span>null</span></div>
<div class="cell n" style="left:1151px;top:268px;width:159px;height:21px;line-height:21px"><span>null</span></div>
<div class="cell t" style="left:1310px;top:268px;width:159px;height:21px;line-height:21px"><span>Tony Stark</span></div>
<div class="rn" style="top:289px;height:21px;line-height:21px">6</div>
<div class="cell t" style="left:188px;top:289px;width:158px;height:21px;line-height:21px;background:#e6e6e6"><span>003As00000ybZfVIAU</span></div>
<div class="cell t" style="left:346px;top:289px;width:159px;height:21px;line-height:21px"><span>001As00000thWGPIA2</span></div>
<div class="cell n" style="left:505px;top:289px;width:159px;height:21px;line-height:21px"><span>null</span></div>
<div class="cell n" style="left:664px;top:289px;width:159px;height:21px;line-height:21px"><span>null</span></div>
<div class="cell d" style="left:823px;top:289px;width:169px;height:21px;line-height:21px;font-size:11px"><span>2/23/2026 6:18:57 PM +00:00</span></div>
<div class="cell n" style="left:992px;top:289px;width:159px;height:21px;line-height:21px"><span>null</span></div>
<div class="cell n" style="left:1151px;top:289px;width:159px;height:21px;line-height:21px"><span>null</span></div>
<div class="cell t" style="left:1310px;top:289px;width:159px;height:21px;line-height:21px"><span>Bruce Wayne</span></div>
<div class="rn" style="top:310px;height:21px;line-height:21px">7</div>
<div class="cell t" style="left:188px;top:310px;width:158px;height:21px;line-height:21px;background:#e6e6e6"><span>003As00000ybZfWIAU</span></div>
<div class="cell t" style="left:346px;top:310px;width:159px;height:21px;line-height:21px"><span>001As00000thWGQIA2</span></div>
<div class="cell n" style="left:505px;top:310px;width:159px;height:21px;line-height:21px"><span>null</span></div>
<div class="cell n" style="left:664px;top:310px;width:159px;height:21px;line-height:21px"><span>null</span></div>
<div class="cell d" style="left:823px;top:310px;width:169px;height:21px;line-height:21px;font-size:11px"><span>2/23/2026 6:18:57 PM +00:00</span></div>
<div class="cell n" style="left:992px;top:310px;width:159px;height:21px;line-height:21px"><span>null</span></div>
<div class="cell n" style="left:1151px;top:310px;width:159px;height:21px;line-height:21px"><span>null</span></div>
<div class="cell t" style="left:1310px;top:310px;width:159px;height:21px;line-height:21px"><span>Norman Osborn</span></div>
<div class="rn" style="top:331px;height:21px;line-height:21px">8</div>
<div class="cell t" style="left:188px;top:331px;width:158px;height:21px;line-height:21px;background:#e6e6e6"><span>003As00000ybZfXIAU</span></div>
<div class="cell t" style="left:346px;top:331px;width:159px;height:21px;line-height:21px"><span>001As00000thWGRIA2</span></div>
<div class="cell n" style="left:505px;top:331px;width:159px;height:21px;line-height:21px"><span>null</span></div>
<div class="cell n" style="left:664px;top:331px;width:159px;height:21px;line-height:21px"><span>null</span></div>
<div class="cell d" style="left:823px;top:331px;width:169px;height:21px;line-height:21px;font-size:11px"><span>2/23/2026 6:18:57 PM +00:00</span></div>
<div class="cell n" style="left:992px;top:331px;width:159px;height:21px;line-height:21px"><span>null</span></div>
<div class="cell n" style="left:1151px;top:331px;width:159px;height:21px;line-height:21px"><span>null</span></div>
<div class="cell t" style="left:1310px;top:331px;width:159px;height:21px;line-height:21px"><span>Charles Weyland</span></div>
<div class="rn" style="top:352px;height:20px;line-height:20px">9</div>
<div class="cell t" style="left:188px;top:352px;width:158px;height:20px;line-height:20px;background:#e6e6e6"><span>003As00000ybZfYIAU</span></div>
<div class="cell t" style="left:346px;top:352px;width:159px;height:20px;line-height:20px"><span>001As00000thWGSIA2</span></div>
<div class="cell n" style="left:505px;top:352px;width:159px;height:20px;line-height:20px"><span>null</span></div>
<div class="cell n" style="left:664px;top:352px;width:159px;height:20px;line-height:20px"><span>null</span></div>
<div class="cell d" style="left:823px;top:352px;width:169px;height:20px;line-height:20px;font-size:11px"><span>2/23/2026 6:18:57 PM +00:00</span></div>
<div class="cell n" style="left:992px;top:352px;width:159px;height:20px;line-height:20px"><span>null</span></div>
<div class="cell n" style="left:1151px;top:352px;width:159px;height:20px;line-height:20px"><span>null</span></div>
<div class="cell t" style="left:1310px;top:352px;width:159px;height:20px;line-height:20px"><span>William Foster</span></div>
<div class="rn" style="top:372px;height:21px;line-height:21px">10</div>
<div class="cell t" style="left:188px;top:372px;width:158px;height:21px;line-height:21px;background:#e6e6e6"><span>003As00000ybZfZIAU</span></div>
<div class="cell t" style="left:346px;top:372px;width:159px;height:21px;line-height:21px"><span>001As00000thWGTIA2</span></div>
<div class="cell n" style="left:505px;top:372px;width:159px;height:21px;line-height:21px"><span>null</span></div>
<div class="cell n" style="left:664px;top:372px;width:159px;height:21px;line-height:21px"><span>null</span></div>
<div class="cell d" style="left:823px;top:372px;width:169px;height:21px;line-height:21px;font-size:11px"><span>2/23/2026 6:18:57 PM +00:00</span></div>
<div class="cell n" style="left:992px;top:372px;width:159px;height:21px;line-height:21px"><span>null</span></div>
<div class="cell n" style="left:1151px;top:372px;width:159px;height:21px;line-height:21px"><span>null</span></div>
<div class="cell t" style="left:1310px;top:372px;width:159px;height:21px;line-height:21px"><span>Miles Dyson</span></div>
<div style="position:absolute;left:5px;top:26px;width:58px;height:76.5px;border:5px solid #ff0000;border-radius:4px"></div>
<svg style="left:0;top:0" width="200" height="160" viewBox="0 0 200 160"><path d="M127 136.7 L76 106" stroke="#ff0000" stroke-width="3.6" stroke-linecap="round" fill="none"/><path d="M64.9 99.2 L84.6 104.2 L77.3 114.2 Z" fill="#ff0000"/></svg>
</div>
</body>
</html>
